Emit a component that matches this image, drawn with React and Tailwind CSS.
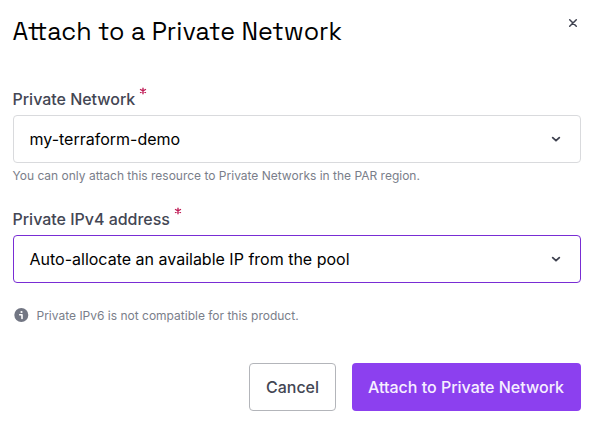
function Chevron() {
  return (
    <svg className="h-[10px] w-[10px] shrink-0" viewBox="0 0 10 10" fill="none" stroke="#3f4250" strokeWidth="1.8" strokeLinecap="round" strokeLinejoin="round">
      <path d="M1.7 3.6 5 6.7 8.3 3.6" />
    </svg>
  );
}

function Label({ children }) {
  return (
    <div className="flex h-6 items-start text-base font-medium leading-6 text-[#434653]">
      <span className="tracking-[-0.02px]">{children}</span>
      <svg className="ml-1 h-2 w-2" viewBox="0 0 8 8" stroke="#c01f58" strokeWidth="1.4" strokeLinecap="round">
        <path d="M4 1.2v5.6M1.5 2.5l5 3M6.5 2.5l-5 3" />
      </svg>
    </div>
  );
}

function Select({ value, active }) {
  return (
    <button className={`flex h-12 w-full items-center justify-between rounded border bg-white pl-4 pr-[19px] text-left text-base text-black ${active ? "border-[#792dd4]" : "border-[#d9dadd]"}`}>
      <span>{value}</span>
      <Chevron />
    </button>
  );
}

export default function App() {
  return (
    <main className="h-[428px] w-[593px] overflow-hidden bg-white pl-[12.5px] pr-3 pt-[15px] font-['Inter',sans-serif]">
      <header className="flex h-[72px] items-start justify-between">
        <h1 className="whitespace-nowrap font-['Space_Grotesk','Inter',sans-serif] text-[25px] leading-8 tracking-[0.01px] text-black">Attach to a Private Network</h1>
        <svg className="mr-[3px] mt-[3px] h-[10px] w-[10px]" viewBox="0 0 10 10" stroke="#3f4250" strokeWidth="1.5" strokeLinecap="round">
          <path d="m1.7 1.7 6.6 6.6m0-6.6-6.6 6.6" />
        </svg>
      </header>
      <section>
        <Label>Private Network</Label>
        <div className="mt-1"><Select value="my-terraform-demo" /></div>
        <p className="mt-1 text-xs leading-[18px] text-[#7a7e8a]">You can only attach this resource to Private Networks in the PAR region.</p>
      </section>
      <section className="mt-[22px]">
        <Label>Private IPv4 address</Label>
        <div className="mt-1"><Select value="Auto-allocate an available IP from the pool" active /></div>
      </section>
      <div className="mt-6 flex h-4 items-center gap-2 text-xs text-[#7a7e8a]">
        <svg className="h-4 w-4" viewBox="0 0 16 16">
          <circle cx="8.3" cy="8" r="7" fill="#727683" />
          <circle cx="8.5" cy="5" r="1.1" fill="white" />
          <path d="M6.7 7.7h2.3v3.8" fill="none" stroke="white" strokeWidth="1.6" strokeLinecap="round" strokeLinejoin="round" />
        </svg>
        <span className="pt-0.5">Private IPv6 is not compatible for this product.</span>
      </div>
      <footer className="mt-10 flex justify-end gap-4 text-base font-medium">
        <button className="h-12 w-[87px] rounded border border-[#b3b5ba] text-[#434653]">Cancel</button>
        <button className="h-12 w-[229px] rounded bg-[#8c40ef] pr-px text-[#f6efff]">Attach to Private Network</button>
      </footer>
    </main>
  );
}
